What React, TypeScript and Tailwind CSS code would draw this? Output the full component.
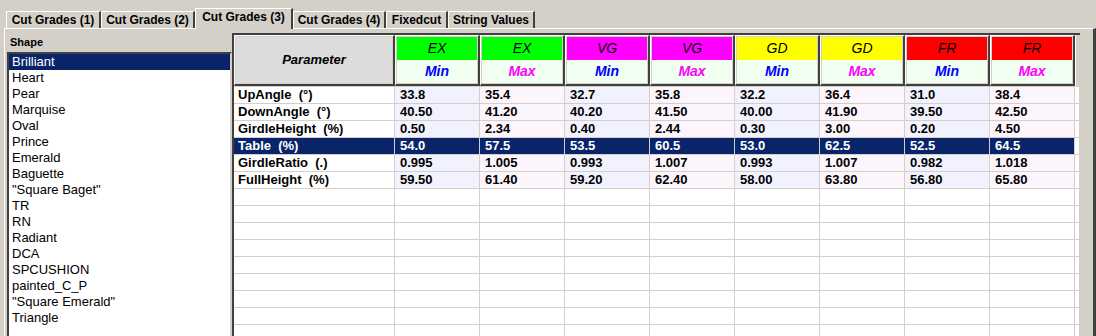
const tabs = [
  { label: 'Cut Grades (1)', w: 'w-[95px]' },
  { label: 'Cut Grades (2)', w: 'w-[94px]' },
  { label: 'Cut Grades (3)', w: 'w-[98px]', active: true },
  { label: 'Cut Grades (4)', w: 'w-[93px]' },
  { label: 'Fixedcut', w: 'w-[62px]' },
  { label: 'String Values', w: 'w-[87px]' },
]

const shapes = [
  'Brilliant',
  'Heart',
  'Pear',
  'Marquise',
  'Oval',
  'Prince',
  'Emerald',
  'Baguette',
  '"Square Baget"',
  'TR',
  'RN',
  'Radiant',
  'DCA',
  'SPCUSHION',
  'painted_C_P',
  '"Square Emerald"',
  'Triangle',
]

const grades = [
  { g: 'EX', bg: 'bg-[#00ff00]' },
  { g: 'VG', bg: 'bg-[#ff00ff]' },
  { g: 'GD', bg: 'bg-[#ffff00]' },
  { g: 'FR', bg: 'bg-[#ff0000]' },
]

const rows = [
  ['UpAngle  (°)', '33.8', '35.4', '32.7', '35.8', '32.2', '36.4', '31.0', '38.4'],
  ['DownAngle  (°)', '40.50', '41.20', '40.20', '41.50', '40.00', '41.90', '39.50', '42.50'],
  ['GirdleHeight  (%)', '0.50', '2.34', '0.40', '2.44', '0.30', '3.00', '0.20', '4.50'],
  ['Table  (%)', '54.0', '57.5', '53.5', '60.5', '53.0', '62.5', '52.5', '64.5'],
  ['GirdleRatio  (.)', '0.995', '1.005', '0.993', '1.007', '0.993', '1.007', '0.982', '1.018'],
  ['FullHeight  (%)', '59.50', '61.40', '59.20', '62.40', '58.00', '63.80', '56.80', '65.80'],
]

const SELECTED_ROW = 3
const TOTAL_ROWS = 15

function HeaderCell({ grade, bg, max }: { grade: string; bg: string; max: boolean }) {
  return (
    <div className="w-[85px] h-[51px] shrink-0 border-t border-l border-t-white border-l-white border-r-2 border-b-2 border-r-[#404040] border-b-[#404040] bg-[#d4d0c8] p-px flex flex-col">
      <div className={`h-[23px] ${bg} flex items-center justify-center text-[14px] italic text-black`}>
        {grade}
      </div>
      <div
        className={`h-[23px] bg-[#f0fff0] flex items-center justify-center text-[14px] font-bold italic ${
          max ? 'text-[#ff00ff]' : 'text-[#0000ff]'
        }`}
      >
        {max ? 'Max' : 'Min'}
      </div>
    </div>
  )
}

export default function App() {
  return (
    <div className="w-[1096px] h-[336px] overflow-hidden bg-[#d4d0c8] font-['Liberation_Sans',Arial,sans-serif] text-black">
      {/* tab strip */}
      <div className="h-[20px] mt-[8px] pl-[6px] flex items-end">
        {tabs.map((t) =>
          t.active ? (
            <div
              key={t.label}
              className={`${t.w} h-[21px] -mb-px relative z-10 bg-[#d4d0c8] border-t border-l border-white border-r-2 border-r-[#404040] text-[12px] font-bold leading-[14px] text-center pt-px`}
            >
              {t.label}
            </div>
          ) : (
            <div
              key={t.label}
              className={`${t.w} h-[17px] bg-[#d4d0c8] border-t border-l border-white border-r-2 border-r-[#404040] text-[12px] font-bold leading-[16px] text-center`}
            >
              {t.label}
            </div>
          )
        )}
      </div>

      {/* tab panel */}
      <div className="ml-[4px] w-[1092px] h-[320px] border-t border-l border-white border-r-[3px] border-r-[#404040] flex">
        <div className="w-[227px] shrink-0 pl-[2px] pt-[6px]">
          <div className="h-[14px] leading-[14px] text-[11px] font-bold pl-[3px] mb-[3px]">Shape</div>
          <div className="w-[225px] h-[300px] bg-white border-2 border-t-[#404040] border-l-[#404040] border-r-[#d4d0c8] border-b-[#d4d0c8]">
            {shapes.map((s, i) => (
              <div
                key={s}
                className={`h-[16px] leading-[16px] text-[13px] pl-[3px] whitespace-pre ${
                  i === 0 ? 'bg-[#0a246a] text-white' : ''
                }`}
              >
                {s}
              </div>
            ))}
          </div>
        </div>

        <div className="mt-[4px] w-[848px] h-[310px] shrink-0 bg-white border-t-2 border-l-2 border-[#404040] flex flex-col overflow-hidden">
          <div className="flex h-[52px] shrink-0 border-b border-[#d4d0c8] bg-[#d4d0c8]">
            <div className="w-[161px] h-[51px] shrink-0 border-t border-l border-t-white border-l-white border-r-2 border-b-2 border-r-[#404040] border-b-[#404040] bg-[#d4d0c8] p-px">
              <div className="h-full bg-[#dcdcdc] flex items-center justify-center text-[13px] font-bold italic">
                Parameter
              </div>
            </div>
            {grades.map((g) => [
              <HeaderCell key={g.g + 'min'} grade={g.g} bg={g.bg} max={false} />,
              <HeaderCell key={g.g + 'max'} grade={g.g} bg={g.bg} max={true} />,
            ])}
            <div className="w-[5px] h-[51px] shrink-0 border-l border-white border-r border-r-[#d4d0c8] bg-[#d4d0c8]" />
          </div>

          {Array.from({ length: TOTAL_ROWS }).map((_, r) => {
            const row = rows[r]
            const sel = r === SELECTED_ROW
            return (
              <div key={r} className="flex h-[17px] shrink-0 border-b border-[#d4d0c8] text-[13px] font-bold leading-[16px]">
                <div
                  className={`w-[161px] shrink-0 border-r border-[#d4d0c8] pl-[4px] whitespace-pre ${
                    sel ? 'bg-[#0a246a] text-white' : 'bg-white'
                  }`}
                >
                  {row ? row[0] : ''}
                </div>
                {Array.from({ length: 8 }).map((_, c) => (
                  <div
                    key={c}
                    className={`w-[85px] shrink-0 border-r border-[#d4d0c8] pl-[5px] ${
                      sel
                        ? 'bg-[#0a246a] text-white'
                        : !row
                        ? 'bg-white'
                        : c % 2 === 0
                        ? 'bg-[#f2f2fe]'
                        : 'bg-[#fcf5fc]'
                    }`}
                  >
                    {row ? row[c + 1] : ''}
                  </div>
                ))}
                <div className="w-[5px] shrink-0 border-r border-[#d4d0c8] bg-white" />
              </div>
            )
          })}
        </div>
      </div>
    </div>
  )
}
